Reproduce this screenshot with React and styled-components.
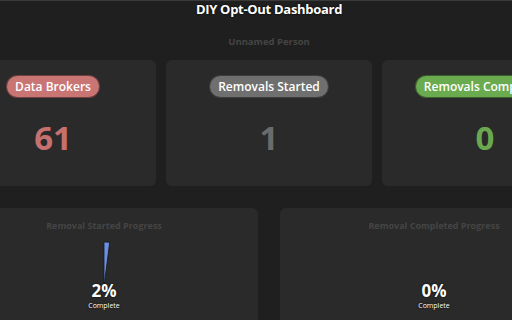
import React from 'react'
import styled, { createGlobalStyle } from 'styled-components'

const GlobalStyle = createGlobalStyle`
  html, body {
    margin: 0;
    padding: 0;
    background-color: #1f1f1f;
    font-family: "Open Sans", "Noto Sans", sans-serif;
  }
`;

const Viewport = styled.div`
  width: 100vw;
  height: 100vh;
  overflow: hidden;
  border-top: 1px solid #3a3a3a;
  box-sizing: border-box;
`;

const Page = styled.div`
  width: 638px;
  margin-left: -50px;
  display: flex;
  flex-direction: column;
  align-items: center;
`;

const Title = styled.h1`
  margin: 0;
  font-size: 13px;
  letter-spacing: -0.3px;
  line-height: 17px;
  font-weight: 700;
  color: #ffffff;
  text-shadow: 0 0 2px #000;
`;

const Person = styled.div`
  margin-top: 18px;
  font-size: 9.5px;
  line-height: 12px;
  font-weight: 700;
  color: #454545;
`;

const StatsRow = styled.div`
  margin-top: 12px;
  width: 100%;
  display: grid;
  grid-template-columns: repeat(3, 1fr);
  gap: 10px;
`;

const StatCard = styled.div`
  height: 126px;
  background-color: #2a2a2a;
  border-radius: 6px;
  padding-top: 15px;
  box-sizing: border-box;
  display: flex;
  flex-direction: column;
  align-items: center;
`;

const Pill = styled.div`
  height: 23px;
  padding: 0 8px;
  border-radius: 12px;
  border: 1px solid rgba(0, 0, 0, 0.45);
  box-sizing: border-box;
  background-color: ${p => p.$color};
  color: #ffffff;
  font-size: 12px;
  font-weight: 600;
  line-height: 21px;
  white-space: nowrap;
`;

const Count = styled.div`
  margin-top: 23px;
  font-size: 33px;
  line-height: 1;
  font-weight: 700;
  color: ${p => p.$color};
`;

const ProgressRow = styled.div`
  margin-top: 22px;
  width: 100%;
  display: grid;
  grid-template-columns: repeat(2, 1fr);
  gap: 22px;
`;

const ProgressCard = styled.div`
  height: 140px;
  background-color: #2a2a2a;
  border-radius: 6px;
  padding-top: 12px;
  box-sizing: border-box;
  display: flex;
  flex-direction: column;
  align-items: center;
`;

const ProgressTitle = styled.div`
  font-size: 9px;
  line-height: 11.4px;
  font-weight: 700;
  color: #454545;
`;

const ChartBox = styled.div`
  position: relative;
  margin-top: 6px;
  width: 100px;
  height: 100px;
`;

const ChartLabel = styled.div`
  position: absolute;
  top: 45px;
  left: 0;
  right: 0;
  display: flex;
  flex-direction: column;
  align-items: center;
  color: #ffffff;
  text-shadow: 0 0 2px #000;
`;

const Percent = styled.div`
  font-size: 17px;
  line-height: 17px;
  font-weight: 700;
`;

const Caption = styled.div`
  margin-top: 3px;
  font-size: 7px;
  line-height: 8.4px;
`;

const stats = [
  { label: 'Data Brokers', value: 61, pill: '#c97574', num: '#c4716f' },
  { label: 'Removals Started', value: 1, pill: '#6f6f6f', num: '#6b6b6b' },
  { label: 'Removals Completed', value: 0, pill: '#6aab50', num: '#6aa84f' },
];

const progress = [
  { label: 'Removal Started Progress', pct: 2 },
  { label: 'Removal Completed Progress', pct: 0 },
];

const Pie = ({ pct }) => {
  if (pct <= 0) return <svg width="100" height="100" viewBox="0 0 100 100" />;
  const a = (pct / 100) * 2 * Math.PI;
  const x = 50 + 45 * Math.sin(a);
  const y = 50 - 45 * Math.cos(a);
  const large = pct > 50 ? 1 : 0;
  return (
    <svg width="100" height="100" viewBox="0 0 100 100">
      <path
        d={`M50 50 L50 5 A45 45 0 ${large} 1 ${x.toFixed(2)} ${y.toFixed(2)} Z`}
        fill="#6a8fe3"
        stroke="#161616"
        strokeWidth="0.8"
      />
    </svg>
  );
};

const App = () => {
  return (
    <Viewport>
      <GlobalStyle />
      <Page>
        <Title>DIY Opt-Out Dashboard</Title>
        <Person>Unnamed Person</Person>
        <StatsRow>
          {stats.map(s => (
            <StatCard key={s.label}>
              <Pill $color={s.pill}>{s.label}</Pill>
              <Count $color={s.num}>{s.value}</Count>
            </StatCard>
          ))}
        </StatsRow>
        <ProgressRow>
          {progress.map(p => (
            <ProgressCard key={p.label}>
              <ProgressTitle>{p.label}</ProgressTitle>
              <ChartBox>
                <Pie pct={p.pct} />
                <ChartLabel>
                  <Percent>{p.pct}%</Percent>
                  <Caption>Complete</Caption>
                </ChartLabel>
              </ChartBox>
            </ProgressCard>
          ))}
        </ProgressRow>
      </Page>
    </Viewport>
  )
}

export default App
